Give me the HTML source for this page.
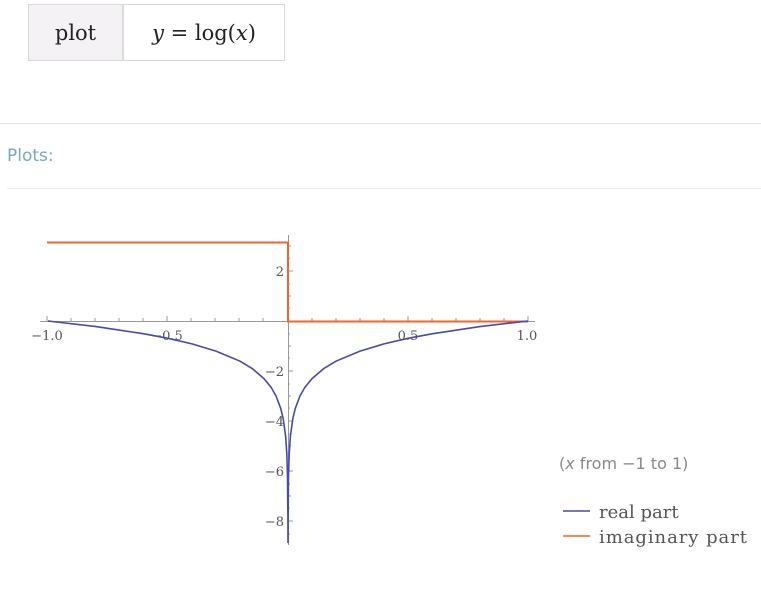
<!DOCTYPE html>
<html><head><meta charset="utf-8"><style>
body{margin:0;width:761px;height:600px;background:#fff;position:relative;overflow:hidden;font-family:"DejaVu Sans",sans-serif}
.tb{position:absolute;left:28px;top:4px;width:255px;height:55px;border:1px solid #d9d9d9;display:flex;font-family:"DejaVu Serif",serif;font-size:21px;color:#222}
.c1{width:93px;background:#f5f2f6;border-right:2px solid #dcdcdc;display:flex;align-items:center;justify-content:center}
.c2{flex:1;display:flex;align-items:center;justify-content:center}
.t{position:absolute}
</style></head><body>
<div class="tb"><div class="c1">plot</div><div class="c2"><i>y</i>&nbsp;=&nbsp;log(<i>x</i>)</div></div>
<div class="t" style="left:0;top:123px;width:761px;height:1px;background:#ddd"></div>
<div class="t" style="left:7px;top:146px;font-size:17px;color:#7aa9bb">Plots:</div>
<div class="t" style="left:7px;top:188px;width:754px;height:1px;background:#e0edf1"></div>
<svg class="t" style="left:0;top:0" width="761" height="600">
<g stroke="#999" stroke-width="1" fill="none">
<line x1="40" y1="321.5" x2="535" y2="321.5"/>
<line x1="288.5" y1="235" x2="288.5" y2="545"/>
<path d="M47 321v-5M71 321v-3M95 321v-3M119 321v-3M143 321v-3M167 321v-5M191 321v-3M215 321v-3M239 321v-3M263 321v-3M312 321v-3M336 321v-3M360 321v-3M384 321v-3M408 321v-5M432 321v-3M456 321v-3M480 321v-3M504 321v-3M528 321v-5"/>
<path d="M288 271h5M288 371h5M288 421h5M288 471h5M288 521h5M288 246h3M288 296h3M288 346h3M288 396h3M288 446h3M288 496h3M288 258h2M288 284h2M288 308h2M288 334h2M288 358h2M288 384h2M288 408h2M288 434h2M288 458h2M288 484h2M288 508h2M288 534h2"/>
</g>
<g font-family="DejaVu Serif,serif" font-size="13" fill="#555">
<text x="47" y="340" text-anchor="middle">−1.0</text>
<text x="167" y="340" text-anchor="middle">−0.5</text>
<text x="408" y="340" text-anchor="middle">0.5</text>
<text x="527" y="340" text-anchor="middle">1.0</text>
<g text-anchor="end"><text x="284" y="276">2</text><text x="284" y="376">−2</text><text x="284" y="426">−4</text><text x="284" y="476">−6</text><text x="284" y="526">−8</text></g>
</g>
<path d="M47 242.5H288V321.5H528" stroke="#f0652a" stroke-width="2" fill="none"/>
<path d="M528 321 L480 326.6 L432 333.8 L408 338.3 L384 343.9 L360 351.1 L336 361.2 L324 368.4 L312 378.6 L304.8 387.5 L300 395.9 L295.2 408.7 L292.8 418.8 L290.4 436.1 L289.2 453.5 L288.5 476.4 L288.1 516.6 L288 543 M288 543 L287.9 516.6 L287.5 476.4 L286.8 453.5 L285.6 436.1 L283.2 418.8 L280.8 408.7 L276 395.9 L271.2 387.5 L264 378.6 L252 368.4 L240 361.2 L216 351.1 L192 343.9 L168 338.3 L144 333.8 L96 326.6 L48 321" stroke="#4a4aa8" stroke-width="1.6" fill="none" stroke-linejoin="round"/>
<line x1="563" y1="511" x2="590" y2="511" stroke="#4a4aa8" stroke-width="1.5"/>
<line x1="563" y1="536" x2="590" y2="536" stroke="#f0652a" stroke-width="1.5"/>
<text x="559" y="469" font-size="16" fill="#888">(<tspan font-style="italic">x</tspan> from −1 to 1)</text>
<g font-family="DejaVu Serif,serif" font-size="18" fill="#555"><text x="599" y="518">real part</text><text x="599" y="543" textLength="148">imaginary part</text></g>
</svg>
</body></html>
